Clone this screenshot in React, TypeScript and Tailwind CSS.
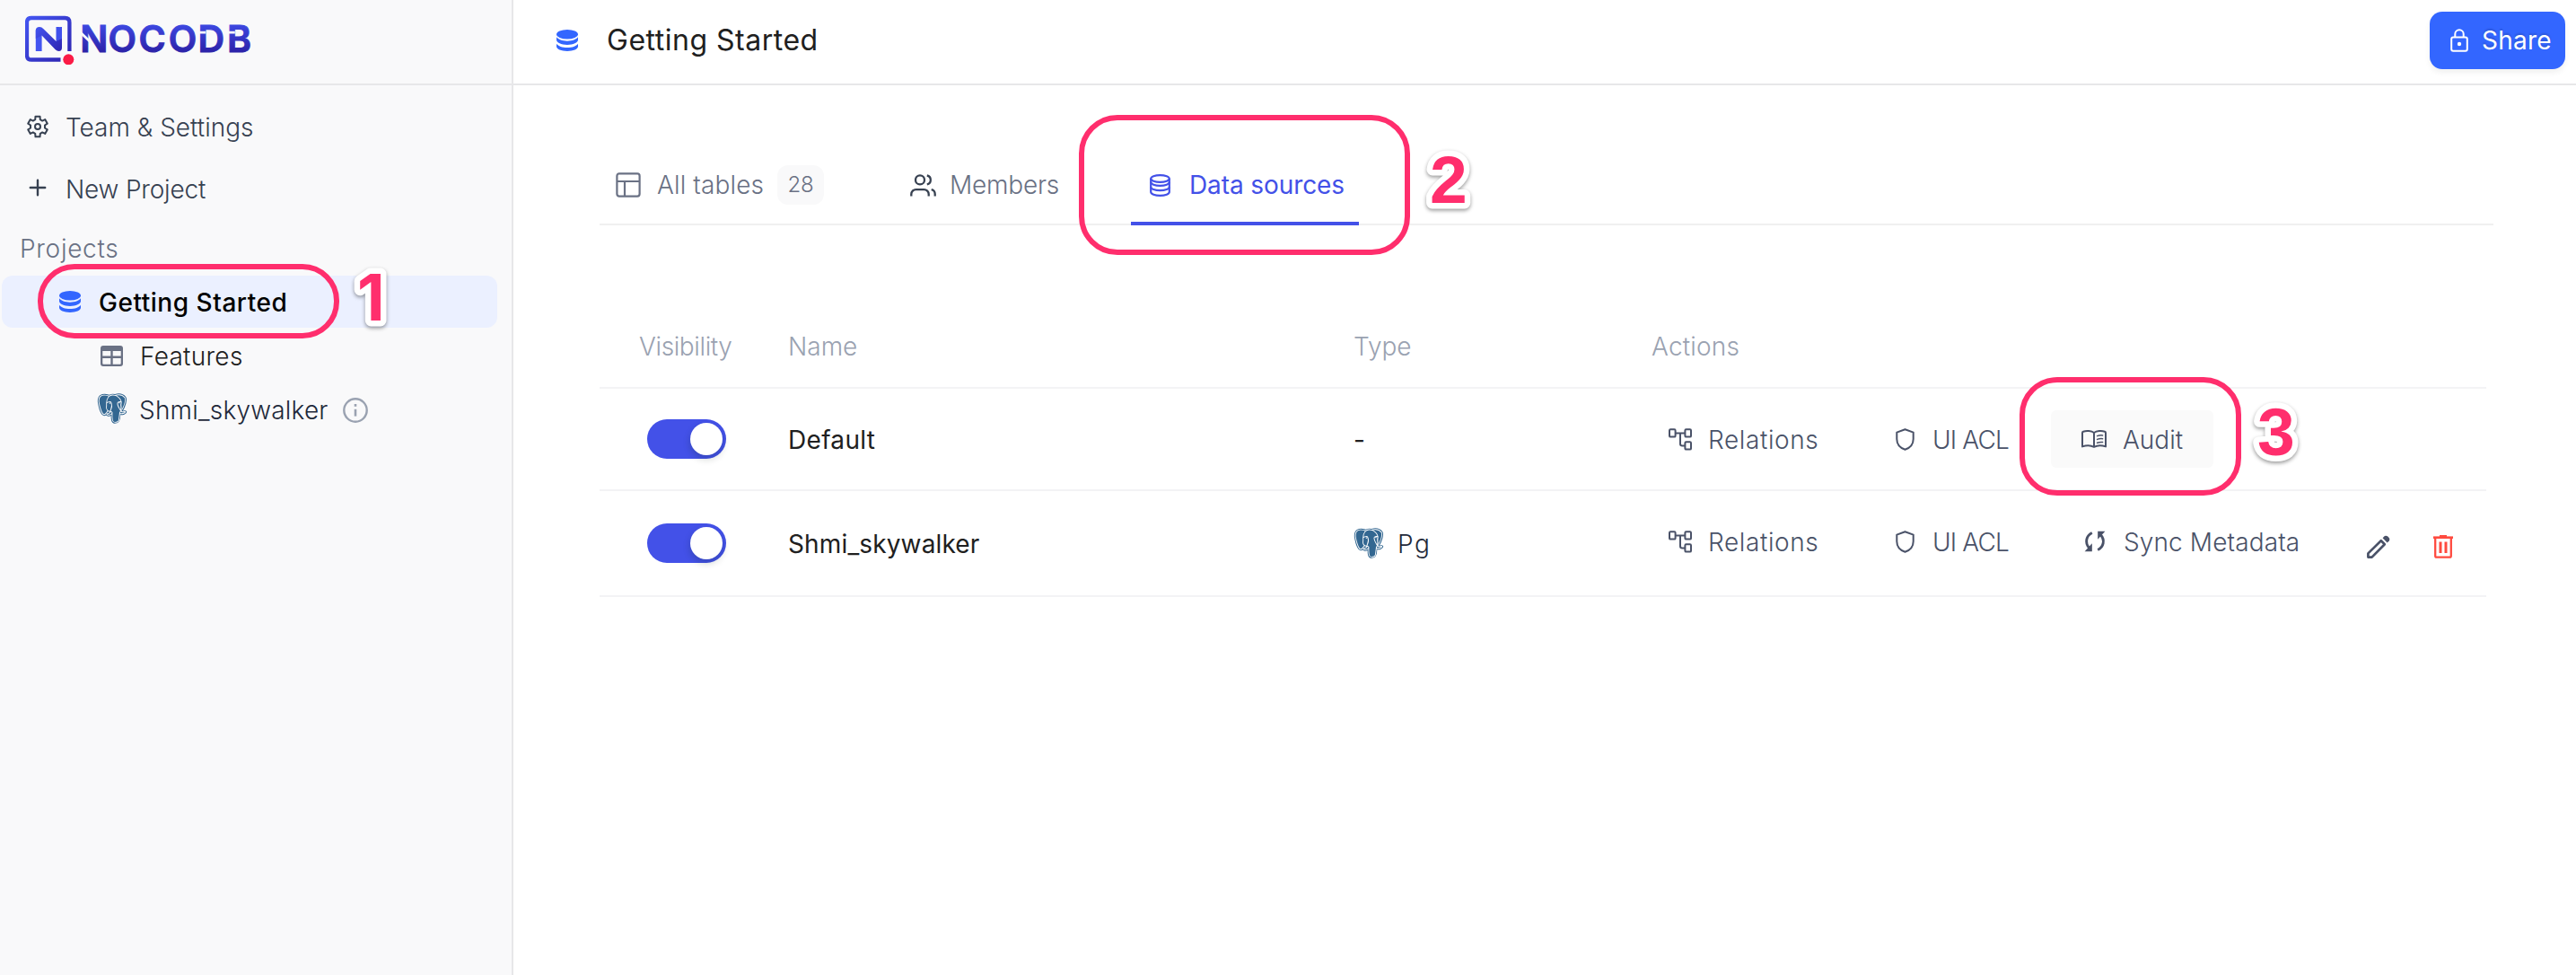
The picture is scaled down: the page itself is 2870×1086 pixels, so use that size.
import React from 'react';
import type { ReactNode } from 'react';
import { BiLogoPostgresql } from 'react-icons/bi';

const gearPath = (() => {
  const pts: string[] = [];
  for (let i = 0; i < 6; i++) {
    const base = -90 + i * 60;
    const steps: [number, number][] = [
      [8.1, -20],
      [11.2, -13],
      [11.2, 13],
      [8.1, 20],
    ];
    for (const [r, d] of steps) {
      const a = ((base + d) * Math.PI) / 180;
      pts.push(`${(12 + r * Math.cos(a)).toFixed(2)} ${(13 + r * 1.04 * Math.sin(a)).toFixed(2)}`);
    }
  }
  return `M${pts.join('L')}Z`;
})();

function GearIcon() {
  return (
    <svg viewBox="0 0 24 26" className="h-[26px] w-[24px] shrink-0" fill="none" stroke="currentColor" strokeWidth="2" strokeLinejoin="round">
      <path d={gearPath} />
      <circle cx="12" cy="13" r="3" />
    </svg>
  );
}

function PlusIcon() {
  return (
    <svg viewBox="0 0 24 24" className="size-[24px] shrink-0" fill="none" stroke="currentColor" strokeWidth="2.4" strokeLinecap="round">
      <path d="M12 3.8v16.4M3.8 12h16.4" />
    </svg>
  );
}

function DatabaseSolidIcon() {
  return (
    <svg viewBox="0 0 24 24" className="size-[24px] shrink-0 text-[#3366ff]" fill="currentColor">
      <ellipse cx="12" cy="5.2" rx="12" ry="5.2" />
      <path d="M0 8.3C2 11 6.500 12.700 12 12.700S22 11 24 8.300V11.500C24 14.500 18.600 16.900 12 16.900S0 14.500 0 11.500Z" />
      <path d="M0 15.800C2 18.500 6.500 20.100 12 20.100S22 18.500 24 15.800V18.800C24 21.700 18.600 24 12 24S0 21.700 0 18.800Z" />
    </svg>
  );
}

function DatabaseOutlineIcon() {
  return (
    <svg viewBox="0 0 23 25" className="h-[25px] w-[23px] shrink-0" fill="none" stroke="currentColor" strokeWidth="2.2">
      <ellipse cx="11.500" cy="5" rx="10.300" ry="3.900" />
      <path d="M1.200 5v14.700c0 2.300 4.600 4.200 10.300 4.200s10.300-1.900 10.300-4.200V5" />
      <path d="M1.200 8.800c0 2.300 4.600 4 10.300 4s10.300-1.700 10.300-4M1.200 14.200c0 2.300 4.600 4 10.300 4s10.300-1.700 10.300-4" />
    </svg>
  );
}

function TableIcon() {
  return (
    <svg viewBox="0 0 25 23" className="h-[23px] w-[25px] shrink-0 text-[#6a7184]">
      <rect width="25" height="23" rx="3" fill="currentColor" />
      <path d="M2.300 6h9v5.600h-9zM13.700 6h9v5.600h-9zM2.300 14h9v6.700h-8a1 1 0 0 1-1-1zM13.700 14h9v5.700a1 1 0 0 1-1 1h-8z" fill="#f9f9fa" />
    </svg>
  );
}

function InfoIcon() {
  return (
    <svg viewBox="0 0 28 28" className="size-[28px] shrink-0 text-[#9aa2b1]" fill="none" stroke="currentColor">
      <circle cx="14" cy="14" r="12.700" strokeWidth="2.400" />
      <path d="M14 12.800v7.800" strokeWidth="2.600" />
      <path d="M14 7v2.800" strokeWidth="2.600" />
    </svg>
  );
}

function LayoutIcon() {
  return (
    <svg viewBox="0 0 28 28" className="size-[28px] shrink-0" fill="none" stroke="currentColor" strokeWidth="2.200">
      <rect x="1.400" y="1.400" width="25.200" height="25.200" rx="2.500" />
      <path d="M1.400 10h25.200M10 10v16.600" />
    </svg>
  );
}

function MembersIcon() {
  return (
    <svg viewBox="0 0 29 25" className="h-[25px] w-[29px] shrink-0 text-[#374151]" fill="none" stroke="currentColor" strokeWidth="2.300">
      <circle cx="11" cy="6.400" r="5" />
      <path d="M1.300 24.500v-2.200a5.200 5.200 0 0 1 5.200-5.200h9a5.200 5.200 0 0 1 5.200 5.200v2.200" />
      <path d="M18.800 1.500a5 5 0 0 1 0 9.800M27.700 24.500v-2.200a5.200 5.200 0 0 0-4-5.100" />
    </svg>
  );
}

function LockIcon() {
  return (
    <svg viewBox="0 0 20 26" className="h-[26px] w-[20px] shrink-0" fill="none" stroke="currentColor" strokeWidth="2">
      <rect x="1.200" y="9.400" width="17.600" height="15.400" rx="2" />
      <path d="M5.300 9.400V6a4.700 4.700 0 0 1 9.400 0v3.400" />
      <circle cx="10" cy="17" r="2.200" fill="currentColor" stroke="none" />
    </svg>
  );
}

function RelationsIcon() {
  return (
    <svg viewBox="0 0 26 25" className="h-[25px] w-[26px] shrink-0" fill="none" stroke="currentColor" strokeWidth="2">
      <rect x="1" y="1.200" width="6.600" height="8.400" rx="1.200" />
      <rect x="18.400" y="1.200" width="6.600" height="8.400" rx="1.200" />
      <rect x="18.400" y="15.200" width="6.600" height="8.400" rx="1.200" />
      <path d="M7.600 5.400h10.800M13 5.400v11.800q0 2.200 2.200 2.200h3.200" />
    </svg>
  );
}

function ShieldIcon() {
  return (
    <svg viewBox="0 0 21 25" className="h-[25px] w-[21px] shrink-0" fill="none" stroke="currentColor" strokeWidth="2" strokeLinejoin="round">
      <path d="M10.500 1.200L19.700 4.600V12c0 5.500-3.500 9.800-9.200 11.800C4.800 21.800 1.300 17.500 1.300 12V4.600Z" />
    </svg>
  );
}

function BookIcon() {
  return (
    <svg viewBox="0 0 28 20" className="h-[20px] w-[28px] shrink-0" fill="none" stroke="currentColor" strokeWidth="2" strokeLinejoin="round" strokeLinecap="round">
      <path d="M14 3C11 .8 5.500.600 2 1.700q-1 .3-1 1.200V18.400c4-1.500 9.500-1.500 13 .4 3.500-1.900 9-1.900 13-.4V2.900q0-.9-1-1.200C22.500.600 17 .800 14 3v15.800" />
      <path d="M17.600 6.600q3-1.100 6-.7M17.600 10.400q3-1.100 6-.7M17.600 14.200q3-1.100 6-.7" strokeWidth="1.500" />
    </svg>
  );
}

function SyncIcon() {
  return (
    <svg viewBox="0 0 24 24" className="size-[24px] shrink-0" fill="none" stroke="currentColor" strokeWidth="2.900">
      <path d="M8.800 2.500C2.500 5.500 .2 13.500 5.800 19.500" />
      <path d="M15.200 21.500C21.500 18.500 23.800 10.500 18.200 4.500" />
      <path d="M.6 23.300h8.200v-9z" fill="currentColor" stroke="none" />
      <path d="M23.400 .7h-8.200v9z" fill="currentColor" stroke="none" />
    </svg>
  );
}

function PencilIcon() {
  return (
    <svg viewBox="0 0 26 26" className="size-[26px] shrink-0 text-[#4a5268]">
      <path d="M1.400 24.600v-4.200L15.800 6.200l4 4L5.600 24.600Z" fill="none" stroke="currentColor" strokeWidth="2.700" strokeLinejoin="round" />
      <path d="M17.600 3.300L19.800 1.100q1.600-1 3.200.2l1.700 1.700q1.300 1.600.2 3.200l-2.200 2.200Z" fill="currentColor" />
    </svg>
  );
}

function TrashIcon() {
  return (
    <svg viewBox="0 0 22 26" className="h-[26px] w-[22px] shrink-0 text-[#ff4a3f]" fill="none" stroke="currentColor">
      <path d="M0 2.700h22" strokeWidth="2.600" />
      <path d="M7 1.200h8" strokeWidth="2.400" />
      <path d="M2.200 3v20.200q0 1.400 1.400 1.400h14.800q1.400 0 1.400-1.400V3" strokeWidth="2.300" />
      <path d="M8 7.500v12.500M14 7.500v12.500" strokeWidth="3" />
    </svg>
  );
}

function PostgresIcon() {
  return <BiLogoPostgresql className="size-[40px] shrink-0 text-[#336791]" />;
}

function Logo() {
  return (
    <svg viewBox="0 0 260 56" className="h-[56px] w-[260px]" role="img" aria-label="NocoDB">
      <defs>
        <linearGradient id="frame" x1="0" y1="0" x2="1" y2="1">
          <stop offset="0" stopColor="#4355f0" />
          <stop offset="1" stopColor="#2e24b0" />
        </linearGradient>
        <linearGradient id="word" gradientUnits="userSpaceOnUse" x1="0" y1="12" x2="0" y2="42">
          <stop offset="0" stopColor="#3d47e0" />
          <stop offset="1" stopColor="#2c22a8" />
        </linearGradient>
      </defs>
      <path d="M49.400 41V9Q49.400 4 44.400 4H7Q2 4 2 9V45.500Q2 50.500 7 50.500H39.500" fill="none" stroke="url(#frame)" strokeWidth="4.300" />
      <path d="M15.200 41V17.300" fill="none" stroke="#4355f0" strokeWidth="6.800" />
      <path d="M36.500 30V17q0-3 3-3h1.500V34z" fill="#4050ec" />
      <path d="M34.500 14h4v20h-4z" fill="#4050ec" />
      <path d="M11.800 18q0-4 4.200-4 2.500 0 4.500 2.200L34.500 30l6.500-3V37q0 4-3.500 4-2 0-3.800-1.700L18.600 23.500 11.800 27Z" fill="url(#frame)" />
      <circle cx="48.300" cy="50.300" r="6" fill="#fb1b45" />
      <g fill="url(#word)" stroke="url(#word)" strokeWidth="1" className="font-['Inter'] text-[41px] font-semibold">
        <text y="41.700" x="61.300 92.500 126.500 159.700 192.500 225">
          NOCODB
        </text>
      </g>
      <g stroke="#f9f9fa" strokeWidth="2.800">
        <path d="M62 20.500L73 31" />
        <path d="M192 20.200h9.300M224 20.200h9.800" />
      </g>
    </svg>
  );
}

function Toggle() {
  return (
    <div className="flex h-[44px] w-[88px] items-center justify-end rounded-full bg-[#4351e8] p-1">
      <div className="size-9 rounded-full bg-white shadow-[0_4px_8px_rgba(0,35,11,0.2)]" />
    </div>
  );
}

function Action({ icon, children, className }: { icon: ReactNode; children: ReactNode; className: string }) {
  return (
    <div className={`flex shrink-0 items-center font-light text-[#4a5268] ${className}`}>
      {icon}
      <span className="mt-0.5">{children}</span>
    </div>
  );
}

function Sidebar() {
  return (
    <aside className="flex w-[572px] shrink-0 flex-col border-r-2 border-[#e7e7e9] bg-[#f9f9fa]">
      <div className="flex h-[95px] items-start border-b-2 border-[#e7e7e9] pt-4 pl-[28px]">
        <Logo />
      </div>
      <nav className="flex flex-col font-light text-[#374151]">
        <div className="mt-3 flex h-[68px] items-center gap-[19px] pl-[30px]">
          <GearIcon />
          <span className="mt-0.5">Team &amp; Settings</span>
        </div>
        <div className="flex h-[68px] items-center gap-[19px] pl-[30px]">
          <PlusIcon />
          <span className="mt-[3px] tracking-[-0.19px]">New Project</span>
        </div>
        <div className="flex h-[64px] items-center pt-1 pl-[22px] tracking-[0.71px] text-[#6a7184]">Projects</div>
        <div className="mr-4 ml-0.5 flex h-[58px] items-center gap-[20px] rounded-xl bg-[#ebf0ff] pl-[64px] font-medium text-black">
          <DatabaseSolidIcon />
          <span className="mt-0.5 tracking-[0.53px]">Getting Started</span>
        </div>
        <div className="flex h-[62px] items-center pl-[104px] text-[#202020]">
          <span className="mr-[12px] flex w-[40px] justify-center">
            <TableIcon />
          </span>
          <span className="mt-px tracking-[0.28px]">Features</span>
        </div>
        <div className="flex h-[60px] items-center pl-[105px] text-[#1f293a]">
          <span className="mr-[10px] mb-1 flex w-[40px] justify-center">
            <PostgresIcon />
          </span>
          <span className="mr-[16px] mb-px tracking-[0.21px]">Shmi_skywalker</span>
          <InfoIcon />
        </div>
      </nav>
    </aside>
  );
}

function Tabs() {
  return (
    <div className="mt-[68px] mr-[92px] ml-[96px] flex h-[88px] border-b-2 border-[#f0f0f0] pl-[18px] font-light text-[#6a7184]">
      <div className="flex w-[328px] shrink-0 items-center">
        <LayoutIcon />
        <span className="ml-[18px] tracking-[0.13px]">All tables</span>
        <span className="ml-[15px] flex h-[44px] w-[52px] items-center justify-center rounded-xl bg-[#f9f9fa] text-2xl">28</span>
      </div>
      <div className="flex w-[246px] shrink-0 items-center">
        <MembersIcon />
        <span className="ml-[15px] tracking-[-0.2px]">Members</span>
      </div>
      <div className="flex h-[88px] w-[254px] shrink-0 items-center border-b-4 border-[#4351e8] pt-0.5 pl-[21px] font-normal text-[#4351e8]">
        <DatabaseOutlineIcon />
        <span className="ml-[21px] tracking-[-0.09px]">Data sources</span>
      </div>
    </div>
  );
}

function SourcesTable() {
  return (
    <div className="mt-[90px] mr-[100px] ml-[96px] flex flex-col">
      <div className="grid h-[92px] grid-cols-[210px_630px_332px_1fr] items-center border-b-2 border-[#f3f3f5] font-light text-[#9aa2b1]">
        <span className="pl-[44px] tracking-[-0.38px]">Visibility</span>
        <span>Name</span>
        <span className="tracking-[-0.1px]">Type</span>
        <span className="tracking-[0.2px]">Actions</span>
      </div>
      <div className="grid h-[114px] grid-cols-[210px_630px_332px_1fr] items-center border-b-2 border-[#f3f3f5] text-[#202020]">
        <div className="pl-[53px]">
          <Toggle />
        </div>
        <span className="pt-0.5 tracking-[0.3px]">Default</span>
        <span className="pt-0.5">-</span>
        <div className="flex items-center pl-[19px]">
          <Action icon={<RelationsIcon />} className="w-[253px] gap-[18px] tracking-[0.6px]">Relations</Action>
          <Action icon={<ShieldIcon />} className="w-[173px] gap-[20px] tracking-[-0.84px]">UI ACL</Action>
          <Action icon={<BookIcon />} className="h-[64px] w-[181px] gap-[18px] rounded-md bg-[#fafafa] pl-[34px]">Audit</Action>
        </div>
      </div>
      <div className="grid h-[118px] grid-cols-[210px_630px_332px_1fr] items-center border-b-2 border-[#f3f3f5] text-[#202020]">
        <div className="pl-[53px]">
          <Toggle />
        </div>
        <span className="pt-0.5 tracking-[0.14px]">Shmi_skywalker</span>
        <div className="-ml-[3px] flex items-center gap-[12px] font-light text-[#1f293a]">
          <PostgresIcon />
          <span className="pt-0.5 tracking-[1.5px]">Pg</span>
        </div>
        <div className="flex items-center pl-[19px]">
          <Action icon={<RelationsIcon />} className="w-[253px] gap-[18px] pb-1 tracking-[0.6px]">Relations</Action>
          <Action icon={<ShieldIcon />} className="w-[173px] gap-[20px] pb-1 tracking-[-0.84px]">UI ACL</Action>
          <Action icon={<SyncIcon />} className="w-[352px] gap-[20px] pb-1 pl-[37px] tracking-[0.12px]">Sync Metadata</Action>
          <div className="flex gap-[48px] pt-2">
            <PencilIcon />
            <TrashIcon />
          </div>
        </div>
      </div>
    </div>
  );
}

function StepNumber({ value, className }: { value: number; className: string }) {
  return (
    <svg viewBox="0 0 60 80" className={`absolute h-[80px] w-[60px] overflow-visible drop-shadow-[0_2px_2px_rgba(0,0,0,0.4)] ${className}`}>
      <text x="10" y="66" fill="#ff2e6d" stroke="#ffffff" strokeWidth="13" strokeLinejoin="round" paintOrder="stroke">
        {value}
      </text>
    </svg>
  );
}

export default function App() {
  return (
    <div className="relative flex h-[1086px] w-[2870px] overflow-hidden bg-white font-['Inter',sans-serif] text-[28px] leading-[40px] whitespace-nowrap">
      <Sidebar />
      <main className="flex flex-1 flex-col">
        <header className="flex h-[95px] items-center border-b-2 border-[#e7e7e9] pr-3 pb-[3px] pl-[48px]">
          <DatabaseSolidIcon />
          <h1 className="ml-[32px] text-[32px] tracking-[0.51px] text-[#202020]">Getting Started</h1>
          <button className="ml-auto flex h-[64px] w-[151px] items-center rounded-[14px] bg-[#3366ff] pl-[23px] text-white shadow-[0_4px_6px_rgba(0,0,0,0.06)]">
            <LockIcon />
            <span className="ml-[15px] tracking-[0.24px] text-shadow-[0_-2px_2px_rgba(0,0,0,0.15)]">Share</span>
          </button>
        </header>
        <Tabs />
        <SourcesTable />
      </main>

      <div className="absolute top-[294px] left-[42px] h-[83px] w-[336px] rounded-[41px] border-6 border-[#ff2e6d]" />
      <div className="absolute top-[128px] left-[1202px] h-[156px] w-[369px] rounded-[43px] border-6 border-[#ff2e6d]" />
      <div className="absolute top-[420px] left-[2250px] h-[132px] w-[247px] rounded-[42px] border-6 border-[#ff2e6d]" />
      <StepNumber value={1} className="top-[291px] left-[388px] text-[71px] font-bold" />
      <StepNumber value={2} className="top-[160px] left-[1583px] font-['Liberation_Sans'] text-[75px] font-bold" />
      <StepNumber value={3} className="top-[441px] left-[2505px] font-['Liberation_Sans'] text-[75px] font-bold" />
    </div>
  );
}
